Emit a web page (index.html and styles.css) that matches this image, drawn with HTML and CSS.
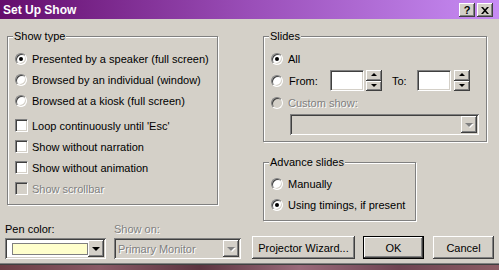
FILE: index.html
```html
<!DOCTYPE html>
<html lang="en">
<head>
    <meta charset="UTF-8">
    <title>Set Up Show</title>
    <link rel="stylesheet" href="styles.css">
</head>
<body>
    <div class="dialog">
        <div class="titlebar">
            <span class="title">Set Up Show</span>
            <div class="caption-buttons">
                <span class="caption-btn help">?</span>
                <span class="caption-btn">
                    <svg width="8" height="7" viewBox="0 0 8 7"><path d="M0 0h2l2 2.3 2-2.3h2L5 3.5 8 7H6L4 4.7 2 7H0l3-3.5z" fill="#000"/></svg>
                </span>
            </div>
        </div>

        <div class="columns">
            <fieldset class="group show-type">
                <legend>Show type</legend>
                <div class="option"><span class="radio checked"></span>Presented by a speaker (full screen)</div>
                <div class="option"><span class="radio"></span>Browsed by an individual (window)</div>
                <div class="option"><span class="radio"></span>Browsed at a kiosk (full screen)</div>
                <div class="checks">
                    <div class="option"><span class="check"></span>Loop continuously until 'Esc'</div>
                    <div class="option"><span class="check"></span>Show without narration</div>
                    <div class="option"><span class="check"></span>Show without animation</div>
                    <div class="option disabled"><span class="check"></span>Show scrollbar</div>
                </div>
            </fieldset>

            <div class="right-col">
                <fieldset class="group slides">
                    <legend>Slides</legend>
                    <div class="option"><span class="radio checked"></span>All</div>
                    <div class="option range">
                        <span class="radio"></span>
                        <span class="range-label from">From:</span>
                        <span class="textbox"></span>
                        <span class="spinner"><span class="spin-btn up"></span><span class="spin-btn down"></span></span>
                        <span class="range-label to">To:</span>
                        <span class="textbox"></span>
                        <span class="spinner second"><span class="spin-btn up"></span><span class="spin-btn down"></span></span>
                    </div>
                    <div class="option custom disabled"><span class="radio"></span>Custom show:</div>
                    <div class="combo custom-combo disabled">
                        <span class="combo-value"></span>
                        <span class="combo-btn"></span>
                    </div>
                </fieldset>

                <fieldset class="group advance">
                    <legend>Advance slides</legend>
                    <div class="option"><span class="radio"></span>Manually</div>
                    <div class="option"><span class="radio checked"></span>Using timings, if present</div>
                </fieldset>
            </div>
        </div>

        <div class="footer">
            <div class="field pen">
                <span class="field-label">Pen color:</span>
                <div class="combo">
                    <span class="combo-value"><span class="swatch"></span></span>
                    <span class="combo-btn"></span>
                </div>
            </div>
            <div class="field show-on disabled">
                <span class="field-label">Show on:</span>
                <div class="combo">
                    <span class="combo-value">Primary Monitor</span>
                    <span class="combo-btn"></span>
                </div>
            </div>
            <div class="buttons">
                <button class="btn wizard">Projector Wizard...</button>
                <button class="btn default">OK</button>
                <button class="btn">Cancel</button>
            </div>
        </div>
    </div>
    <div class="desktop"></div>
</body>
</html>
```

FILE: styles.css
```css
body {
    margin: 0;
    width: 499px;
    height: 270px;
    overflow: hidden;
    font-family: "Liberation Sans", Arial, sans-serif;
    font-size: 11px;
    color: #000;
    background-color: #d4d0c8;
}

.dialog {
    height: 265px;
    box-sizing: border-box;
    background-color: #d4d0c8;
    box-shadow: inset 0 -1px #808080;
    border-bottom: 1px solid #404040;
}

/* title bar */
.titlebar {
    height: 19px;
    display: flex;
    align-items: center;
    justify-content: space-between;
    padding: 0 6px 0 3px;
    background: linear-gradient(to right, #640c6c, #9a4eb8 50%, #c78cf4);
}

.title {
    color: #fff;
    font-weight: bold;
    font-size: 12px;
    padding-top: 1px;
}

.caption-buttons {
    display: flex;
    gap: 2px;
    margin-top: 1px;
}

.caption-btn {
    width: 16px;
    height: 14px;
    box-sizing: border-box;
    display: flex;
    align-items: center;
    justify-content: center;
    background-color: #d4d0c8;
    box-shadow: inset -1px -1px #404040, inset 1px 1px #fff, inset -2px -2px #808080;
    font-weight: bold;
    font-size: 11px;
}

/* group boxes */
.columns {
    display: flex;
    align-items: flex-start;
    gap: 45px;
    padding: 11px 0 0 7px;
}

.group {
    margin: 0;
    min-width: 0;
    box-sizing: border-box;
    border: 1px solid #808080;
    box-shadow: inset 1px 1px #fff, 1px 1px #fff;
    padding: 5px 7px 5px 7px;
}

.group legend {
    line-height: 13px;
    padding: 0 1px;
    margin-left: -2px;
    background-color: #d4d0c8;
}

.show-type {
    width: 211px;
}

.right-col {
    display: flex;
    flex-direction: column;
}

.slides {
    width: 224px;
    padding-bottom: 6px;
}

.advance {
    width: 153px;
    margin-top: 14px;
    padding-top: 4px;
}

.option {
    display: flex;
    align-items: center;
    height: 21px;
    white-space: nowrap;
}

.checks {
    margin-top: 4px;
}

.disabled {
    color: #808080;
    text-shadow: 1px 1px 0 #fff;
}

/* radio and check */
.radio {
    position: relative;
    flex: none;
    width: 12px;
    height: 12px;
    box-sizing: border-box;
    margin-right: 5px;
    border-radius: 50%;
    background-color: #fff;
    border: 1px solid;
    border-color: #808080 #fff #fff #808080;
    box-shadow: inset 1px 1px #404040, inset -1px -1px #d4d0c8;
}

.disabled .radio {
    background-color: #d4d0c8;
}

.radio.checked::after {
    content: "";
    position: absolute;
    left: 3px;
    top: 3px;
    width: 4px;
    height: 4px;
    border-radius: 50%;
    background-color: #000;
}

.check {
    flex: none;
    width: 13px;
    height: 13px;
    box-sizing: border-box;
    margin-right: 4px;
    background-color: #fff;
    border: 1px solid;
    border-color: #808080 #fff #fff #808080;
    box-shadow: inset 1px 1px #404040, inset -1px -1px #d4d0c8;
}

.disabled .check {
    background-color: #d4d0c8;
}

/* from / to */
.range {
    height: 23px;
}

.range-label.from {
    width: 41px;
    margin-left: 1px;
}

.range-label.to {
    width: 25px;
    margin-left: 10px;
}

.textbox {
    width: 34px;
    height: 21px;
    box-sizing: border-box;
    background-color: #fff;
    border: 1px solid;
    border-color: #808080 #fff #fff #808080;
    box-shadow: inset 1px 1px #404040, inset -1px -1px #d4d0c8;
}

.spinner {
    display: flex;
    flex-direction: column;
    width: 16px;
    height: 21px;
    margin-left: 2px;
}

.spinner.second {
    margin-left: 3px;
}

.spin-btn {
    flex: 1;
    display: flex;
    align-items: center;
    justify-content: center;
    background-color: #d4d0c8;
    box-shadow: inset -1px -1px #404040, inset 1px 1px #fff, inset -2px -2px #808080;
}

.spin-btn.up::after {
    content: "";
    border-left: 3px solid transparent;
    border-right: 3px solid transparent;
    border-bottom: 3px solid #000;
    margin-bottom: 1px;
}

.spin-btn.down::after {
    content: "";
    border-left: 3px solid transparent;
    border-right: 3px solid transparent;
    border-top: 3px solid #000;
    margin-bottom: 1px;
}

.custom {
    height: 22px;
}

/* combo boxes */
.combo {
    display: flex;
    height: 21px;
    box-sizing: border-box;
    padding: 2px;
    background-color: #fff;
    box-shadow: inset 1px 1px #808080, inset -1px -1px #fff, inset 2px 2px #404040, inset -2px -2px #d4d0c8;
}

.combo-value {
    flex: 1;
    display: flex;
    align-items: center;
    padding-left: 2px;
    white-space: nowrap;
}

.combo-btn {
    width: 16px;
    display: flex;
    align-items: center;
    justify-content: center;
    background-color: #d4d0c8;
    box-shadow: inset -1px -1px #404040, inset 1px 1px #fff, inset -2px -2px #808080;
}

.combo-btn::after {
    content: "";
    border-left: 4px solid transparent;
    border-right: 4px solid transparent;
    border-top: 4px solid #000;
}

.disabled .combo,
.combo.disabled {
    background-color: #d4d0c8;
}

.disabled .combo-btn::after {
    border-top-color: #808080;
    filter: drop-shadow(1px 1px 0 #fff);
}

.custom-combo {
    width: 189px;
    margin-left: 19px;
}

.swatch {
    width: 76px;
    height: 12px;
    margin-left: 3px;
    box-sizing: border-box;
    background-color: #ffffcc;
    border: 1px solid #808080;
}

/* footer */
.footer {
    display: flex;
    align-items: flex-end;
    margin-top: 2px;
    padding-left: 5px;
}

.field {
    display: flex;
    flex-direction: column;
    gap: 2px;
}

.field-label {
    line-height: 13px;
}

.pen {
    width: 101px;
}

.show-on {
    width: 127px;
    margin-left: 8px;
}

.buttons {
    display: flex;
    margin-left: 11px;
}

.btn {
    height: 23px;
    width: 61px;
    margin: 0 0 0 9px;
    padding: 0;
    border: none;
    font-family: inherit;
    font-size: 11px;
    color: #000;
    background-color: #d4d0c8;
    box-shadow: inset -1px -1px #404040, inset 1px 1px #fff, inset -2px -2px #808080;
}

.btn.wizard {
    width: 103px;
    margin-left: 0;
}

.btn.default {
    margin-left: 8px;
    border: 1px solid #000;
}

.desktop {
    height: 5px;
    background: linear-gradient(to right, #6b3d44, #8a5a66 20%, #5c3440 40%, #9a6a7a 60%, #6e4452 80%, #8c5c64);
}
```
